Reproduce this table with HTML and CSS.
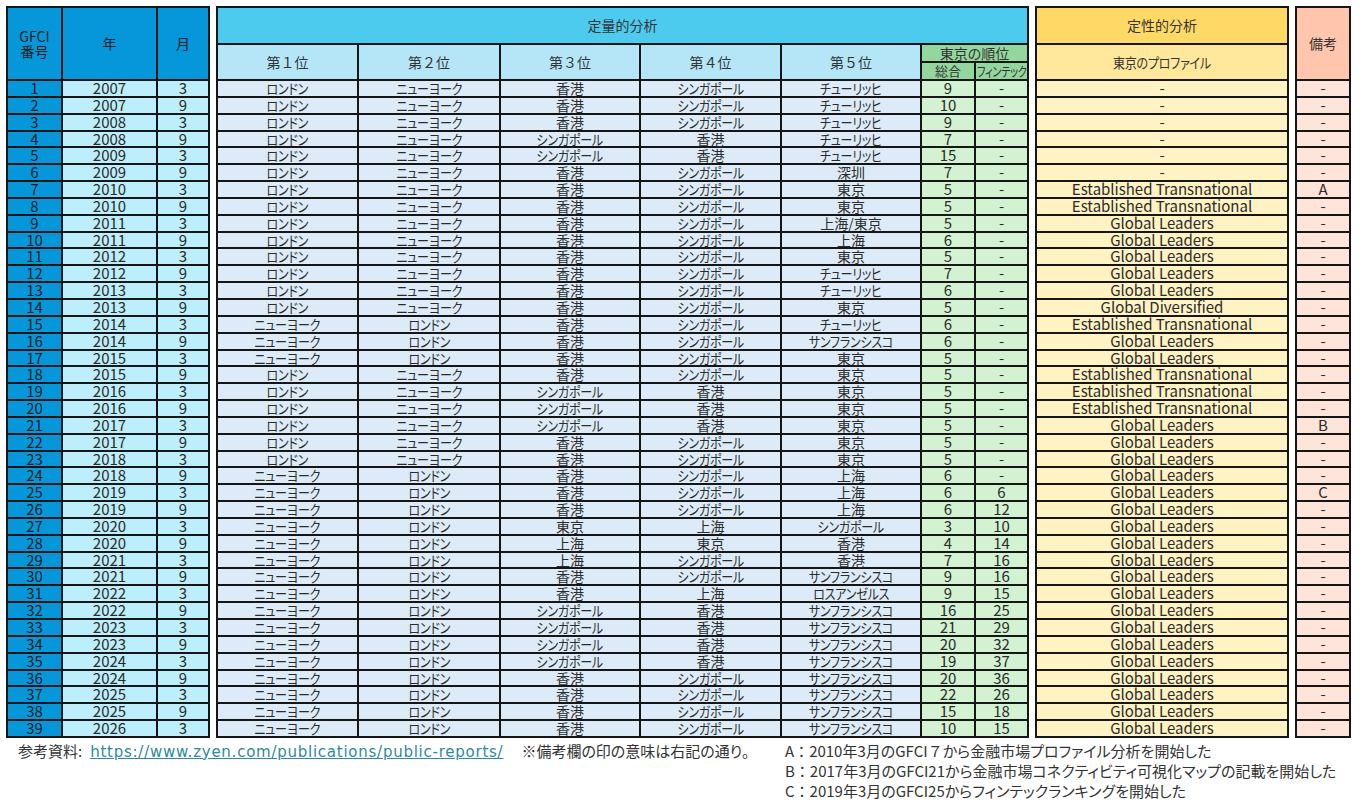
FILE: index.html
```html
<!DOCTYPE html>
<html lang="ja">
<head>
<meta charset="utf-8">
<title>GFCI</title>
<link rel="stylesheet" href="styles.css">
</head>
<body>
<div class="sheet">
  <div class="blk b1">
    <div class="h hb tall">GFCI<br>番号</div>
    <div class="h hb tall">年</div>
    <div class="h hb tall">月</div>
    <div class="c num">1</div><div class="c">2007</div><div class="c">3</div>
    <div class="c num">2</div><div class="c">2007</div><div class="c">9</div>
    <div class="c num">3</div><div class="c">2008</div><div class="c">3</div>
    <div class="c num">4</div><div class="c">2008</div><div class="c">9</div>
    <div class="c num">5</div><div class="c">2009</div><div class="c">3</div>
    <div class="c num">6</div><div class="c">2009</div><div class="c">9</div>
    <div class="c num">7</div><div class="c">2010</div><div class="c">3</div>
    <div class="c num">8</div><div class="c">2010</div><div class="c">9</div>
    <div class="c num">9</div><div class="c">2011</div><div class="c">3</div>
    <div class="c num">10</div><div class="c">2011</div><div class="c">9</div>
    <div class="c num">11</div><div class="c">2012</div><div class="c">3</div>
    <div class="c num">12</div><div class="c">2012</div><div class="c">9</div>
    <div class="c num">13</div><div class="c">2013</div><div class="c">3</div>
    <div class="c num">14</div><div class="c">2013</div><div class="c">9</div>
    <div class="c num">15</div><div class="c">2014</div><div class="c">3</div>
    <div class="c num">16</div><div class="c">2014</div><div class="c">9</div>
    <div class="c num">17</div><div class="c">2015</div><div class="c">3</div>
    <div class="c num">18</div><div class="c">2015</div><div class="c">9</div>
    <div class="c num">19</div><div class="c">2016</div><div class="c">3</div>
    <div class="c num">20</div><div class="c">2016</div><div class="c">9</div>
    <div class="c num">21</div><div class="c">2017</div><div class="c">3</div>
    <div class="c num">22</div><div class="c">2017</div><div class="c">9</div>
    <div class="c num">23</div><div class="c">2018</div><div class="c">3</div>
    <div class="c num">24</div><div class="c">2018</div><div class="c">9</div>
    <div class="c num">25</div><div class="c">2019</div><div class="c">3</div>
    <div class="c num">26</div><div class="c">2019</div><div class="c">9</div>
    <div class="c num">27</div><div class="c">2020</div><div class="c">3</div>
    <div class="c num">28</div><div class="c">2020</div><div class="c">9</div>
    <div class="c num">29</div><div class="c">2021</div><div class="c">3</div>
    <div class="c num">30</div><div class="c">2021</div><div class="c">9</div>
    <div class="c num">31</div><div class="c">2022</div><div class="c">3</div>
    <div class="c num">32</div><div class="c">2022</div><div class="c">9</div>
    <div class="c num">33</div><div class="c">2023</div><div class="c">3</div>
    <div class="c num">34</div><div class="c">2023</div><div class="c">9</div>
    <div class="c num">35</div><div class="c">2024</div><div class="c">3</div>
    <div class="c num">36</div><div class="c">2024</div><div class="c">9</div>
    <div class="c num">37</div><div class="c">2025</div><div class="c">3</div>
    <div class="c num">38</div><div class="c">2025</div><div class="c">9</div>
    <div class="c num">39</div><div class="c">2026</div><div class="c">3</div>
  </div>

  <div class="blk b2">
    <div class="h h1 span-all">定量的分析</div>
    <div class="h h2 sub fw">第１位</div>
    <div class="h h2 sub fw">第２位</div>
    <div class="h h2 sub fw">第３位</div>
    <div class="h h2 sub fw">第４位</div>
    <div class="h h2 sub fw">第５位</div>
    <div class="h hg rank">東京の順位</div>
    <div class="h hg sm">総合</div>
    <div class="h hg sm ft"><span class="k">フィンテック</span></div>

    <div class="c"><span class="k">ロンドン</span></div><div class="c"><span class="k">ニューヨーク</span></div><div class="c">香港</div><div class="c"><span class="k">シンガポール</span></div><div class="c"><span class="k">チューリッヒ</span></div><div class="c g">9</div><div class="c g">-</div>
    <div class="c"><span class="k">ロンドン</span></div><div class="c"><span class="k">ニューヨーク</span></div><div class="c">香港</div><div class="c"><span class="k">シンガポール</span></div><div class="c"><span class="k">チューリッヒ</span></div><div class="c g">10</div><div class="c g">-</div>
    <div class="c"><span class="k">ロンドン</span></div><div class="c"><span class="k">ニューヨーク</span></div><div class="c">香港</div><div class="c"><span class="k">シンガポール</span></div><div class="c"><span class="k">チューリッヒ</span></div><div class="c g">9</div><div class="c g">-</div>
    <div class="c"><span class="k">ロンドン</span></div><div class="c"><span class="k">ニューヨーク</span></div><div class="c"><span class="k">シンガポール</span></div><div class="c">香港</div><div class="c"><span class="k">チューリッヒ</span></div><div class="c g">7</div><div class="c g">-</div>
    <div class="c"><span class="k">ロンドン</span></div><div class="c"><span class="k">ニューヨーク</span></div><div class="c"><span class="k">シンガポール</span></div><div class="c">香港</div><div class="c"><span class="k">チューリッヒ</span></div><div class="c g">15</div><div class="c g">-</div>
    <div class="c"><span class="k">ロンドン</span></div><div class="c"><span class="k">ニューヨーク</span></div><div class="c">香港</div><div class="c"><span class="k">シンガポール</span></div><div class="c">深圳</div><div class="c g">7</div><div class="c g">-</div>
    <div class="c"><span class="k">ロンドン</span></div><div class="c"><span class="k">ニューヨーク</span></div><div class="c">香港</div><div class="c"><span class="k">シンガポール</span></div><div class="c">東京</div><div class="c g">5</div><div class="c g">-</div>
    <div class="c"><span class="k">ロンドン</span></div><div class="c"><span class="k">ニューヨーク</span></div><div class="c">香港</div><div class="c"><span class="k">シンガポール</span></div><div class="c">東京</div><div class="c g">5</div><div class="c g">-</div>
    <div class="c"><span class="k">ロンドン</span></div><div class="c"><span class="k">ニューヨーク</span></div><div class="c">香港</div><div class="c"><span class="k">シンガポール</span></div><div class="c">上海/東京</div><div class="c g">5</div><div class="c g">-</div>
    <div class="c"><span class="k">ロンドン</span></div><div class="c"><span class="k">ニューヨーク</span></div><div class="c">香港</div><div class="c"><span class="k">シンガポール</span></div><div class="c">上海</div><div class="c g">6</div><div class="c g">-</div>
    <div class="c"><span class="k">ロンドン</span></div><div class="c"><span class="k">ニューヨーク</span></div><div class="c">香港</div><div class="c"><span class="k">シンガポール</span></div><div class="c">東京</div><div class="c g">5</div><div class="c g">-</div>
    <div class="c"><span class="k">ロンドン</span></div><div class="c"><span class="k">ニューヨーク</span></div><div class="c">香港</div><div class="c"><span class="k">シンガポール</span></div><div class="c"><span class="k">チューリッヒ</span></div><div class="c g">7</div><div class="c g">-</div>
    <div class="c"><span class="k">ロンドン</span></div><div class="c"><span class="k">ニューヨーク</span></div><div class="c">香港</div><div class="c"><span class="k">シンガポール</span></div><div class="c"><span class="k">チューリッヒ</span></div><div class="c g">6</div><div class="c g">-</div>
    <div class="c"><span class="k">ロンドン</span></div><div class="c"><span class="k">ニューヨーク</span></div><div class="c">香港</div><div class="c"><span class="k">シンガポール</span></div><div class="c">東京</div><div class="c g">5</div><div class="c g">-</div>
    <div class="c"><span class="k">ニューヨーク</span></div><div class="c"><span class="k">ロンドン</span></div><div class="c">香港</div><div class="c"><span class="k">シンガポール</span></div><div class="c"><span class="k">チューリッヒ</span></div><div class="c g">6</div><div class="c g">-</div>
    <div class="c"><span class="k">ニューヨーク</span></div><div class="c"><span class="k">ロンドン</span></div><div class="c">香港</div><div class="c"><span class="k">シンガポール</span></div><div class="c"><span class="k">サンフランシスコ</span></div><div class="c g">6</div><div class="c g">-</div>
    <div class="c"><span class="k">ニューヨーク</span></div><div class="c"><span class="k">ロンドン</span></div><div class="c">香港</div><div class="c"><span class="k">シンガポール</span></div><div class="c">東京</div><div class="c g">5</div><div class="c g">-</div>
    <div class="c"><span class="k">ロンドン</span></div><div class="c"><span class="k">ニューヨーク</span></div><div class="c">香港</div><div class="c"><span class="k">シンガポール</span></div><div class="c">東京</div><div class="c g">5</div><div class="c g">-</div>
    <div class="c"><span class="k">ロンドン</span></div><div class="c"><span class="k">ニューヨーク</span></div><div class="c"><span class="k">シンガポール</span></div><div class="c">香港</div><div class="c">東京</div><div class="c g">5</div><div class="c g">-</div>
    <div class="c"><span class="k">ロンドン</span></div><div class="c"><span class="k">ニューヨーク</span></div><div class="c"><span class="k">シンガポール</span></div><div class="c">香港</div><div class="c">東京</div><div class="c g">5</div><div class="c g">-</div>
    <div class="c"><span class="k">ロンドン</span></div><div class="c"><span class="k">ニューヨーク</span></div><div class="c"><span class="k">シンガポール</span></div><div class="c">香港</div><div class="c">東京</div><div class="c g">5</div><div class="c g">-</div>
    <div class="c"><span class="k">ロンドン</span></div><div class="c"><span class="k">ニューヨーク</span></div><div class="c">香港</div><div class="c"><span class="k">シンガポール</span></div><div class="c">東京</div><div class="c g">5</div><div class="c g">-</div>
    <div class="c"><span class="k">ロンドン</span></div><div class="c"><span class="k">ニューヨーク</span></div><div class="c">香港</div><div class="c"><span class="k">シンガポール</span></div><div class="c">東京</div><div class="c g">5</div><div class="c g">-</div>
    <div class="c"><span class="k">ニューヨーク</span></div><div class="c"><span class="k">ロンドン</span></div><div class="c">香港</div><div class="c"><span class="k">シンガポール</span></div><div class="c">上海</div><div class="c g">6</div><div class="c g">-</div>
    <div class="c"><span class="k">ニューヨーク</span></div><div class="c"><span class="k">ロンドン</span></div><div class="c">香港</div><div class="c"><span class="k">シンガポール</span></div><div class="c">上海</div><div class="c g">6</div><div class="c g">6</div>
    <div class="c"><span class="k">ニューヨーク</span></div><div class="c"><span class="k">ロンドン</span></div><div class="c">香港</div><div class="c"><span class="k">シンガポール</span></div><div class="c">上海</div><div class="c g">6</div><div class="c g">12</div>
    <div class="c"><span class="k">ニューヨーク</span></div><div class="c"><span class="k">ロンドン</span></div><div class="c">東京</div><div class="c">上海</div><div class="c"><span class="k">シンガポール</span></div><div class="c g">3</div><div class="c g">10</div>
    <div class="c"><span class="k">ニューヨーク</span></div><div class="c"><span class="k">ロンドン</span></div><div class="c">上海</div><div class="c">東京</div><div class="c">香港</div><div class="c g">4</div><div class="c g">14</div>
    <div class="c"><span class="k">ニューヨーク</span></div><div class="c"><span class="k">ロンドン</span></div><div class="c">上海</div><div class="c"><span class="k">シンガポール</span></div><div class="c">香港</div><div class="c g">7</div><div class="c g">16</div>
    <div class="c"><span class="k">ニューヨーク</span></div><div class="c"><span class="k">ロンドン</span></div><div class="c">香港</div><div class="c"><span class="k">シンガポール</span></div><div class="c"><span class="k">サンフランシスコ</span></div><div class="c g">9</div><div class="c g">16</div>
    <div class="c"><span class="k">ニューヨーク</span></div><div class="c"><span class="k">ロンドン</span></div><div class="c">香港</div><div class="c">上海</div><div class="c"><span class="k">ロスアンゼルス</span></div><div class="c g">9</div><div class="c g">15</div>
    <div class="c"><span class="k">ニューヨーク</span></div><div class="c"><span class="k">ロンドン</span></div><div class="c"><span class="k">シンガポール</span></div><div class="c">香港</div><div class="c"><span class="k">サンフランシスコ</span></div><div class="c g">16</div><div class="c g">25</div>
    <div class="c"><span class="k">ニューヨーク</span></div><div class="c"><span class="k">ロンドン</span></div><div class="c"><span class="k">シンガポール</span></div><div class="c">香港</div><div class="c"><span class="k">サンフランシスコ</span></div><div class="c g">21</div><div class="c g">29</div>
    <div class="c"><span class="k">ニューヨーク</span></div><div class="c"><span class="k">ロンドン</span></div><div class="c"><span class="k">シンガポール</span></div><div class="c">香港</div><div class="c"><span class="k">サンフランシスコ</span></div><div class="c g">20</div><div class="c g">32</div>
    <div class="c"><span class="k">ニューヨーク</span></div><div class="c"><span class="k">ロンドン</span></div><div class="c"><span class="k">シンガポール</span></div><div class="c">香港</div><div class="c"><span class="k">サンフランシスコ</span></div><div class="c g">19</div><div class="c g">37</div>
    <div class="c"><span class="k">ニューヨーク</span></div><div class="c"><span class="k">ロンドン</span></div><div class="c">香港</div><div class="c"><span class="k">シンガポール</span></div><div class="c"><span class="k">サンフランシスコ</span></div><div class="c g">20</div><div class="c g">36</div>
    <div class="c"><span class="k">ニューヨーク</span></div><div class="c"><span class="k">ロンドン</span></div><div class="c">香港</div><div class="c"><span class="k">シンガポール</span></div><div class="c"><span class="k">サンフランシスコ</span></div><div class="c g">22</div><div class="c g">26</div>
    <div class="c"><span class="k">ニューヨーク</span></div><div class="c"><span class="k">ロンドン</span></div><div class="c">香港</div><div class="c"><span class="k">シンガポール</span></div><div class="c"><span class="k">サンフランシスコ</span></div><div class="c g">15</div><div class="c g">18</div>
    <div class="c"><span class="k">ニューヨーク</span></div><div class="c"><span class="k">ロンドン</span></div><div class="c">香港</div><div class="c"><span class="k">シンガポール</span></div><div class="c"><span class="k">サンフランシスコ</span></div><div class="c g">10</div><div class="c g">15</div>
  </div>

  <div class="blk b3">
    <div class="h hy1">定性的分析</div>
    <div class="h hy2 sub"><span class="k">東京のプロファイル</span></div>
    <div class="c">-</div>
    <div class="c">-</div>
    <div class="c">-</div>
    <div class="c">-</div>
    <div class="c">-</div>
    <div class="c">-</div>
    <div class="c">Established Transnational</div>
    <div class="c">Established Transnational</div>
    <div class="c">Global Leaders</div>
    <div class="c">Global Leaders</div>
    <div class="c">Global Leaders</div>
    <div class="c">Global Leaders</div>
    <div class="c">Global Leaders</div>
    <div class="c">Global Diversified</div>
    <div class="c">Established Transnational</div>
    <div class="c">Global Leaders</div>
    <div class="c">Global Leaders</div>
    <div class="c">Established Transnational</div>
    <div class="c">Established Transnational</div>
    <div class="c">Established Transnational</div>
    <div class="c">Global Leaders</div>
    <div class="c">Global Leaders</div>
    <div class="c">Global Leaders</div>
    <div class="c">Global Leaders</div>
    <div class="c">Global Leaders</div>
    <div class="c">Global Leaders</div>
    <div class="c">Global Leaders</div>
    <div class="c">Global Leaders</div>
    <div class="c">Global Leaders</div>
    <div class="c">Global Leaders</div>
    <div class="c">Global Leaders</div>
    <div class="c">Global Leaders</div>
    <div class="c">Global Leaders</div>
    <div class="c">Global Leaders</div>
    <div class="c">Global Leaders</div>
    <div class="c">Global Leaders</div>
    <div class="c">Global Leaders</div>
    <div class="c">Global Leaders</div>
    <div class="c">Global Leaders</div>
  </div>

  <div class="blk b4">
    <div class="h hp tall">備考</div>
    <div class="c">-</div>
    <div class="c">-</div>
    <div class="c">-</div>
    <div class="c">-</div>
    <div class="c">-</div>
    <div class="c">-</div>
    <div class="c">A</div>
    <div class="c">-</div>
    <div class="c">-</div>
    <div class="c">-</div>
    <div class="c">-</div>
    <div class="c">-</div>
    <div class="c">-</div>
    <div class="c">-</div>
    <div class="c">-</div>
    <div class="c">-</div>
    <div class="c">-</div>
    <div class="c">-</div>
    <div class="c">-</div>
    <div class="c">-</div>
    <div class="c">B</div>
    <div class="c">-</div>
    <div class="c">-</div>
    <div class="c">-</div>
    <div class="c">C</div>
    <div class="c">-</div>
    <div class="c">-</div>
    <div class="c">-</div>
    <div class="c">-</div>
    <div class="c">-</div>
    <div class="c">-</div>
    <div class="c">-</div>
    <div class="c">-</div>
    <div class="c">-</div>
    <div class="c">-</div>
    <div class="c">-</div>
    <div class="c">-</div>
    <div class="c">-</div>
    <div class="c">-</div>
  </div>
</div>

<div class="foot">
  <div class="foot-left">
    <span>参考資料:<a class="link" href="#">https://www.zyen.com/publications/public-reports/</a></span>
    <span class="mark">※備考欄の印の意味は右記の通り。</span>
  </div>
  <div class="notes">
    <div><span class="pre">A：</span>2010年3月の<span class="pre">GFCI７</span>から金融市場プロファイル分析を開始した</div>
    <div><span class="pre">B：</span>2017年3月のGFCI21から金融市場コネクティビティ可視化マップの記載を開始した</div>
    <div><span class="pre">C：</span>2019年3月のGFCI25からフィンテックランキングを開始した</div>
  </div>
</div>
</body>
</html>
```

FILE: styles.css
```css
* { box-sizing: border-box; }

html, body {
  margin: 0;
  padding: 0;
  background: #ffffff;
}

body {
  font-family: "Noto Sans CJK JP", "Noto Sans", sans-serif;
  font-feature-settings: "palt";
  color: #2b2b2b;
  width: 1360px;
  height: 804px;
  overflow: hidden;
}

.sheet {
  display: flex;
  gap: 6px;
  padding: 6px 0 0 6px;
  align-items: flex-start;
}

.blk {
  display: grid;
  grid-template-rows: 35px 16px 16px repeat(39, 14.85px);
  gap: 2px;
  padding: 2px;
  background: #161616;
}

.b1 { grid-template-columns: 53px 93px 50px; }
.b2 { grid-template-columns: 139px 140px 138px 139px 138px 52px 51px; }
.b3 { grid-template-columns: 250px; }
.b4 { grid-template-columns: 52px; }

.h {
  display: flex;
  align-items: center;
  justify-content: center;
  text-align: center;
  font-size: 14px;
  line-height: 15px;
  color: #333;
  white-space: nowrap;
}

.fw { font-feature-settings: normal; }

.c {
  display: flex;
  align-items: center;
  justify-content: center;
  font-size: 15px;
  line-height: 14.85px;
  white-space: nowrap;
  color: #2b2b2b;
}

.b2 .c {
  font-size: 14px;
}
.b2 .c.g {
  font-size: 15px;
}

/* narrow proportional katakana, centred in its cell */
.k {
  display: inline-block;
  transform: scaleX(0.86);
  transform-origin: center;
  letter-spacing: -0.3px;
}

.tall { grid-row: 1 / 4; }
.sub { grid-row: 2 / 4; }
.span-all { grid-column: 1 / -1; }
.rank { grid-row: 2; grid-column: 6 / 8; }
.sm { grid-row: 3; font-size: 13px; line-height: 16px; }
.ft { font-size: 13px; }
.ft .k { transform: scaleX(0.78); letter-spacing: -0.4px; }

/* block 1 */
.hb { background: #0597da; color: #1e1e1e; }
.b1 .c { background: #bdeefb; }
.b1 .c.num { background: #0597da; color: #1e1e1e; }

/* block 2 */
.h1 { background: #4dcbee; }
.h2 { background: #b4e6f7; }
.hg { background: #93d69e; }
.b2 .c { background: #dcebf7; }
.b2 .c.g { background: #d2f2d2; }

/* block 3 */
.hy1 { background: #ffd966; }
.hy2 { background: #ffe79b; }
.b3 .c { background: #fff2c3; }

/* block 4 */
.hp { background: #ffc6ad; }
.b4 .c { background: #ffe4da; }

/* footer */
.foot {
  display: grid;
  grid-template-columns: 767px 1fr;
  padding: 3px 0 0 18px;
  font-size: 15px;
  line-height: 20px;
  color: #333;
}

.foot-left {
  display: flex;
  gap: 18px;
  align-items: flex-start;
}

.link {
  margin-left: 8px;
  color: #2c8aa3;
  text-decoration: underline;
  font-family: "DejaVu Sans", "Noto Sans CJK JP", sans-serif;
  font-size: 15px;
  letter-spacing: 0.75px;
}

.notes {
  display: flex;
  flex-direction: column;
}

.pre { font-feature-settings: normal; }
```
